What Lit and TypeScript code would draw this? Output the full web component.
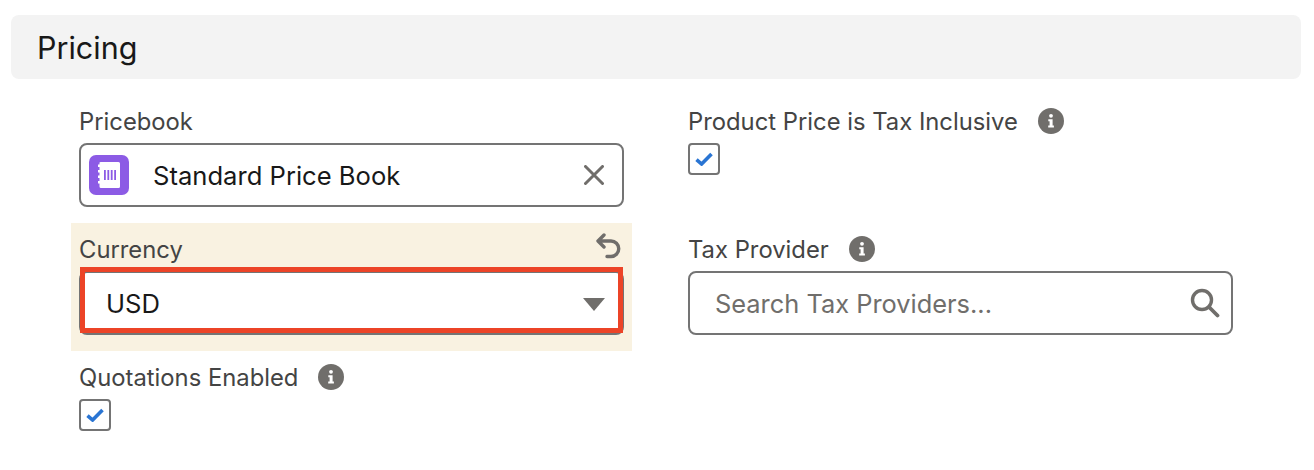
import { LitElement, html, css } from "lit";
import { customElement } from "lit/decorators.js";

const info = html`<svg class="info" viewBox="0 0 26 26"><circle cx="13" cy="13" r="13" fill="#706e6b"/><circle cx="13" cy="7.8" r="1.9" fill="#fff"/><path d="M10.3 11.2h4.3v6.3h1.3v2H10.2v-2h1.4v-4.3h-1.3z" fill="#fff"/></svg>`;
const check = html`<div class="check"><svg viewBox="0 0 18 14" width="18" height="14"><path d="M1.5 7.6 6.6 12 16.5 2" fill="none" stroke="#2a75d3" stroke-width="3.6"/></svg></div>`;

@customElement("app-root")
export class AppRoot extends LitElement {
  static styles = css`
    :host { display: block; width: 1314px; height: 470px; background: #fff; font-family: Inter, "Liberation Sans", sans-serif; color: #181818; overflow: hidden; }
    .page { padding: 15px 13px 0 11px; }
    .header { height: 64px; background: #f3f3f3; border-radius: 8px; display: flex; align-items: center; padding-left: 26px; font-size: 30.5px; }
    .grid { display: grid; grid-template-columns: 561px 561px; column-gap: 48px; padding: 28px 0 0 60px; grid-template-rows: 116px 128px 100px; }
    .field { padding: 0 8px; }
    .changed { background: #f9f2e1; position: relative; padding-top: 12px; }
    .label { display: flex; align-items: center; height: 28px; margin-bottom: 8px; font-size: 23.8px; color: #444; gap: 20px; white-space: nowrap; }
    .label span, .input span.text { padding-top: 1px; }
    .info { width: 26px; height: 26px; flex: none; }
    .input { box-sizing: border-box; height: 64px; border: 2px solid #747474; border-radius: 8px; background: #fff; display: flex; align-items: center; font-size: 25.6px; }
    .pill { padding: 0 18px 0 8px; gap: 24px; }
    .pill .text { flex: 1; }
    .book { width: 40px; height: 40px; flex: none; }
    .close { width: 20px; height: 20px; flex: none; }
    .select { position: relative; padding: 0 17px 0 25px; justify-content: space-between; }
    .select::after { content: ""; position: absolute; left: -1px; right: -1px; top: -6px; bottom: 0; border: 5px solid #ec4427; }
    .tri { width: 0; height: 0; border-left: 11px solid transparent; border-right: 11px solid transparent; border-top: 13px solid #706e6b; margin-top: 2px; }
    .undo { position: absolute; right: 10px; top: 9px; width: 26px; height: 28px; }
    .search { padding: 0 11px 0 25px; color: #706e6b; justify-content: space-between; font-size: 25.4px; }
    .search svg { width: 30px; height: 30px; }
    .check { box-sizing: border-box; width: 32px; height: 32px; border: 2px solid #747474; border-radius: 4px; background: #fff; display: flex; align-items: center; justify-content: center; }
    .tax { padding-top: 12px; }
  `;

  render() {
    return html`<div class="page">
      <div class="header">Pricing</div>
      <div class="grid">
        <div class="field">
          <div class="label"><span>Pricebook</span></div>
          <div class="input pill">
            <svg class="book" viewBox="0 0 40 40"><rect width="40" height="40" rx="7" fill="#8c5be5"/><path d="M12 7h17.500a1.500 1.500 0 0 1 1.500 1.500v23a1.500 1.500 0 0 1-1.500 1.500H12a1.500 1.500 0 0 1-1.500-1.500v-3H9v-2.500h1.500v-3H9v-2.500h1.500v-3H9v-2.500h1.500v-3H9v-2.500h1.500v-2A1.500 1.500 0 0 1 12 7z" fill="#fff"/><path d="M15 15h1.800v10H15zM18.400 15h1.800v10h-1.800zM21.800 15h1.800v10h-1.800zM25.200 15H27v10h-1.800z" fill="#8c5be5"/></svg>
            <span class="text">Standard Price Book</span>
            <svg class="close" viewBox="0 0 20 20"><path d="M1.500 1.500l17 17M18.500 1.500l-17 17" stroke="#706e6b" stroke-width="3" stroke-linecap="round"/></svg>
          </div>
        </div>
        <div class="field">
          <div class="label"><span>Product Price is Tax Inclusive</span> ${info}</div>
          ${check}
        </div>
        <div class="field changed">
          <div class="label"><span>Currency</span></div>
          <svg class="undo" viewBox="0 0 26 28"><path d="M8 3 2 9 8 15M2.500 9H15a7.750 7.750 0 0 1 0 15.500h-4" fill="none" stroke="#706e6b" stroke-width="3.400" stroke-linecap="round" stroke-linejoin="round"/></svg>
          <div class="input select"><span class="text">USD</span><span class="tri"></span></div>
        </div>
        <div class="field tax">
          <div class="label"><span>Tax Provider</span> ${info}</div>
          <div class="input search"><span class="text">Search Tax Providers...</span>
            <svg viewBox="0 0 30 30"><circle cx="12" cy="12" r="9.500" fill="none" stroke="#706e6b" stroke-width="3.400"/><path d="M19 19l8.500 8.500" stroke="#706e6b" stroke-width="3.800" stroke-linecap="round"/></svg>
          </div>
        </div>
        <div class="field tax">
          <div class="label"><span>Quotations Enabled</span> ${info}</div>
          ${check}
        </div>
      </div>
    </div>`;
  }
}
